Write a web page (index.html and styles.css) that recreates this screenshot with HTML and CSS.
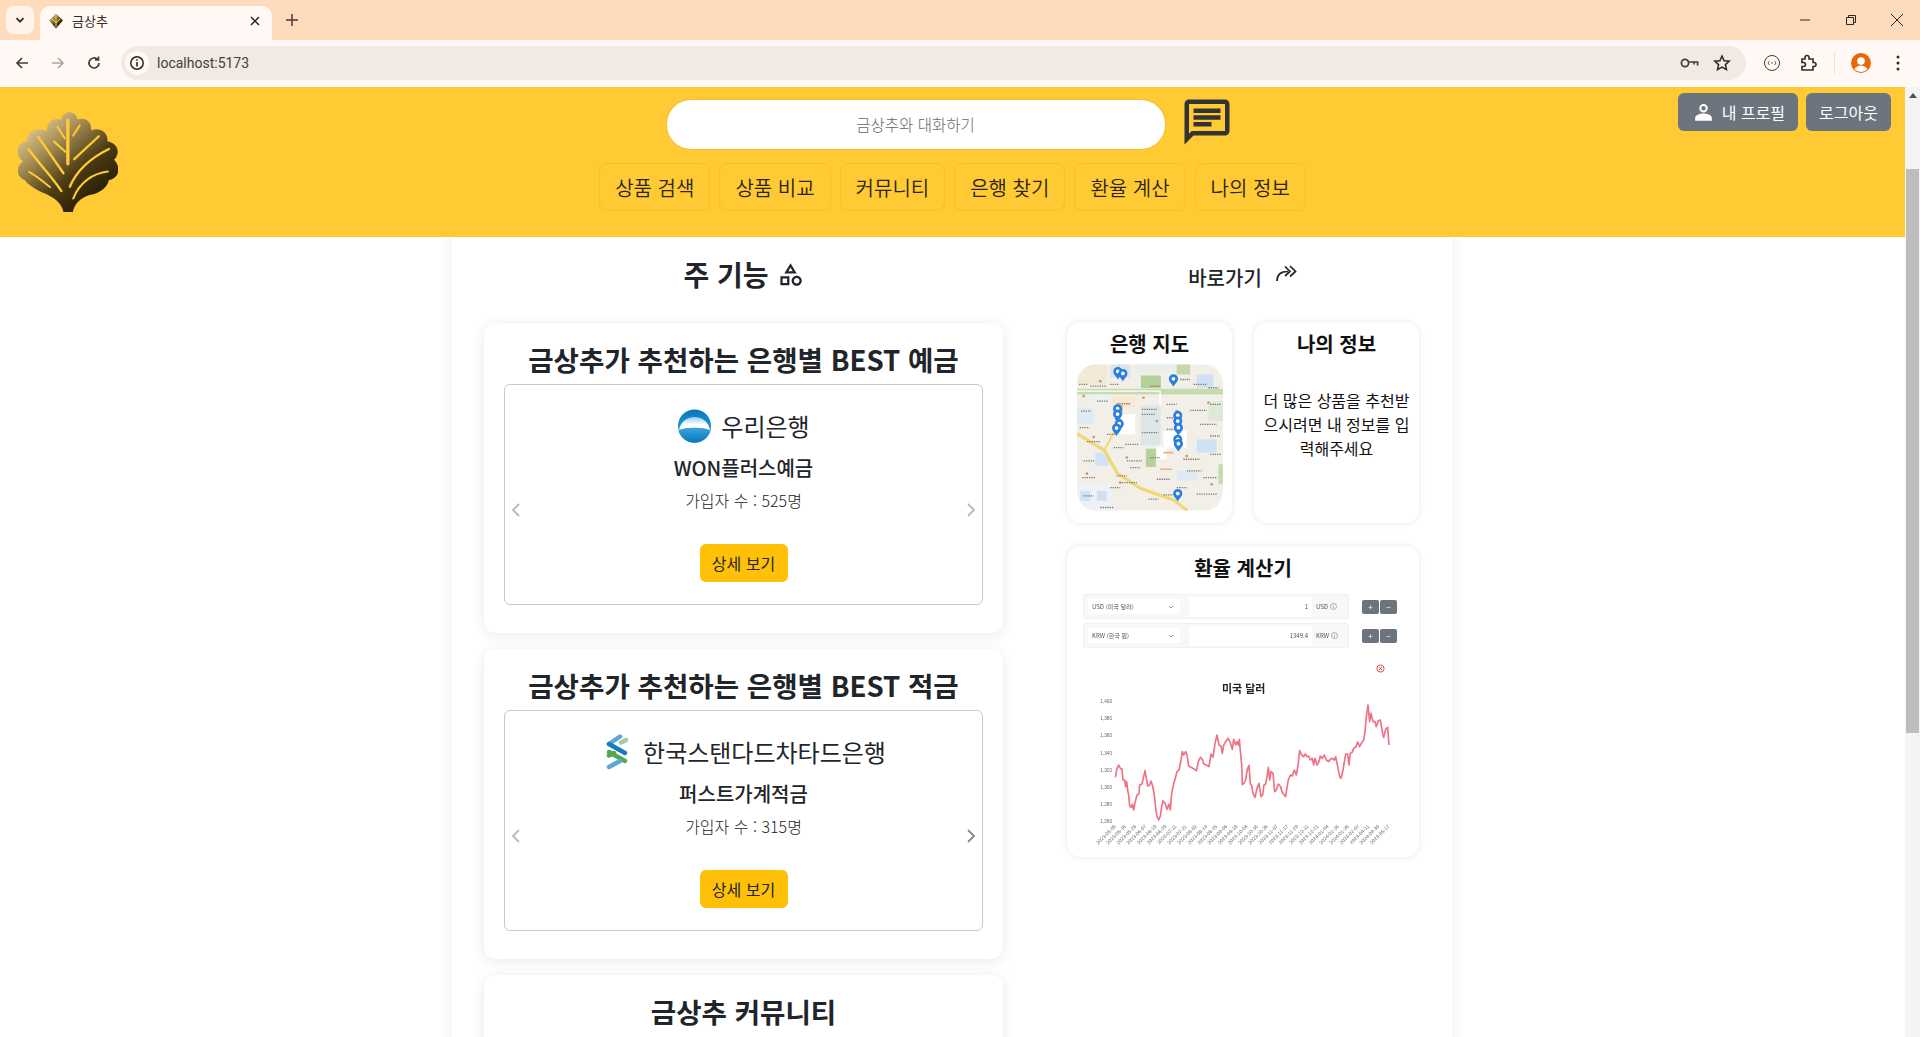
FILE: index.html
```html
<!DOCTYPE html>
<html lang="ko">
<head>
<meta charset="utf-8">
<title>금상추</title>
<link rel="stylesheet" href="styles.css">
</head>
<body>
<svg class="defs" width="0" height="0" aria-hidden="true">
  <defs>
    <linearGradient id="leafGrad" x1="0.1" y1="0.1" x2="0.8" y2="0.95">
      <stop offset="0" stop-color="#e8d49a"/>
      <stop offset="0.3" stop-color="#a58c55"/>
      <stop offset="0.62" stop-color="#4e3d14"/>
      <stop offset="1" stop-color="#1d1602"/>
    </linearGradient>
    <linearGradient id="wooriTop" x1="0" y1="0" x2="0" y2="1">
      <stop offset="0" stop-color="#0a74b8"/>
      <stop offset="0.45" stop-color="#1b93d0"/>
      <stop offset="1" stop-color="#1b93d0"/>
    </linearGradient>
    <linearGradient id="wooriGlow" x1="0" y1="0" x2="0" y2="1">
      <stop offset="0" stop-color="#8fd0ee"/>
      <stop offset="0.55" stop-color="#ffffff"/>
      <stop offset="1" stop-color="#ffffff"/>
    </linearGradient>
    <linearGradient id="wooriBottom" x1="0" y1="0" x2="0" y2="1">
      <stop offset="0" stop-color="#3aa6da"/>
      <stop offset="1" stop-color="#0a76b9"/>
    </linearGradient>
    <symbol id="pin" viewBox="0 0 24 32">
      <path d="M12 1a11 11 0 0 1 11 11c0 7-7 11-11 19C8 23 1 19 1 12A11 11 0 0 1 12 1z" fill="#2a7de1"/>
      <circle cx="12" cy="12" r="4.500" fill="#fff"/>
    </symbol>
  </defs>
</svg>

<div class="tabstrip">
  <div class="tab-search">
    <svg width="12" height="12" viewBox="0 0 12 12"><path d="M2.500 4.200 6 7.700l3.500-3.500" fill="none" stroke="#3b2a1e" stroke-width="1.800"/></svg>
  </div>
  <div class="tab">
    <svg class="favicon" width="16" height="16" viewBox="0 0 16 16"><path d="M8 0.500 15 7.500 8 15.500 1 7.500z" fill="url(#leafGrad)"/><path d="M8 2v12M4 6l4 4M12 6l-4 4" stroke="#f4d35e" stroke-width="1"/></svg>
    <span class="tab-title">금상추</span>
    <svg class="tab-close" width="12" height="12" viewBox="0 0 12 12"><path d="M2 2l8 8M10 2l-8 8" stroke="#2e2420" stroke-width="1.500"/></svg>
  </div>
  <svg class="tab-new" width="14" height="14" viewBox="0 0 14 14"><path d="M7 1v12M1 7h12" stroke="#4a3a30" stroke-width="1.500"/></svg>
  <div class="window-controls">
    <div class="win-btn"><svg width="12" height="12" viewBox="0 0 12 12"><path d="M1 6h10" stroke="#2e2420"/></svg></div>
    <div class="win-btn"><svg width="12" height="12" viewBox="0 0 12 12"><path d="M1.500 3.500h7v7h-7zM3.500 3.500v-2h7v7h-2" fill="none" stroke="#2e2420"/></svg></div>
    <div class="win-btn"><svg width="14" height="14" viewBox="0 0 14 14"><path d="M1 1l12 12M13 1 1 13" stroke="#2e2420"/></svg></div>
  </div>
</div>

<div class="toolbar">
  <div class="tool"><svg width="16" height="16" viewBox="0 0 16 16"><path d="M14 8H3M8 3 3 8l5 5" fill="none" stroke="#4b3b30" stroke-width="1.700"/></svg></div>
  <div class="tool"><svg width="16" height="16" viewBox="0 0 16 16"><path d="M2 8h11M8 3l5 5-5 5" fill="none" stroke="#b0a69f" stroke-width="1.700"/></svg></div>
  <div class="tool"><svg width="16" height="16" viewBox="0 0 16 16"><path d="M13 8a5 5 0 1 1-1.500-3.600M12.500 1.500v3.400H9" fill="none" stroke="#4b3b30" stroke-width="1.700"/></svg></div>
  <div class="omnibox">
    <div class="site-info"><svg width="16" height="16" viewBox="0 0 16 16"><circle cx="8" cy="8" r="6.200" fill="none" stroke="#2e2420" stroke-width="1.500"/><path d="M8 7v4.500M8 4.200v1.600" stroke="#2e2420" stroke-width="1.600"/></svg></div>
    <span class="url">localhost:5173</span>
    <svg class="omni-key" width="20" height="14" viewBox="0 0 20 14"><circle cx="5" cy="7" r="3.600" fill="none" stroke="#4b3b30" stroke-width="1.700"/><path d="M8.600 6h9v3.500M14 6v2.500" fill="none" stroke="#4b3b30" stroke-width="1.700"/></svg>
    <svg class="omni-star" width="18" height="18" viewBox="0 0 18 18"><path d="M9 2l2.100 4.700 5.100.5-3.800 3.400 1.100 5L9 13l-4.500 2.600 1.100-5L1.800 7.200l5.100-.5z" fill="none" stroke="#2e2420" stroke-width="1.500"/></svg>
  </div>
  <div class="tool tool-first"><svg width="18" height="18" viewBox="0 0 18 18"><circle cx="9" cy="9" r="7.500" fill="none" stroke="#4b3b30" stroke-width="1"/><path d="M6.500 7 5 9l1.500 2M11.500 7 13 9l-1.500 2M8 9h2" fill="none" stroke="#4b3b30" stroke-width=".8"/></svg></div>
  <div class="tool"><svg width="18" height="18" viewBox="0 0 18 18"><path d="M3 5h3V3.500a2 2 0 0 1 4 0V5h4v3.500h1a2 2 0 0 1 0 4h-1V16H3v-3.500h1.500a2 2 0 0 0 0-4H3z" fill="none" stroke="#3b2a1e" stroke-width="1.600"/></svg></div>
  <div class="tool-sep"></div>
  <div class="avatar"><svg width="20" height="20" viewBox="0 0 20 20"><circle cx="10" cy="10" r="10" fill="#e8670a"/><circle cx="10" cy="8" r="3.800" fill="#fff"/><path d="M3.500 16.500c1.500-3 4-4 6.500-4s5 1 6.500 4a10 10 0 0 1-13 0z" fill="#fff"/></svg></div>
  <div class="tool tool-dots"><svg width="4" height="16" viewBox="0 0 4 16"><circle cx="2" cy="2" r="1.500" fill="#3b2a1e"/><circle cx="2" cy="8" r="1.500" fill="#3b2a1e"/><circle cx="2" cy="14" r="1.500" fill="#3b2a1e"/></svg></div>
</div>

<div class="viewport">
  <div class="page">
    <header class="site-header">
      <div class="logo-col">
        <svg class="logo" width="100" height="100" viewBox="55 68 297 297">
          <path d="M190 365C186 340 160 320 135 310C110 300 85 285 75 270C52 262 44 232 70 215C42 190 52 160 82 155C82 125 112 112 140 125C140 96 165 82 182 92C190 62 224 60 232 90C258 82 274 100 272 122C302 112 324 132 320 155C350 160 362 188 340 210C362 232 356 264 325 270C320 297 290 312 265 315C240 325 222 340 218 365Z" fill="url(#leafGrad)"/>
          <g fill="none" stroke="#ffca34" stroke-linecap="round">
            <path d="M203 92V222" stroke-width="10"/>
            <path d="M115 142 190 250" stroke-width="7"/>
            <path d="M86 178C120 225 160 265 184 303" stroke-width="7"/>
            <path d="M88 246C110 258 130 275 150 291" stroke-width="6"/>
            <path d="M172 112 194 146" stroke-width="6"/>
            <path d="M162 156 196 186" stroke-width="6"/>
            <path d="M238 108 219 138" stroke-width="6"/>
            <path d="M295 140 222 208" stroke-width="7"/>
            <path d="M325 178C270 205 230 240 209 290" stroke-width="7"/>
            <path d="M322 245C280 250 238 275 219 325" stroke-width="6"/>
          </g>
        </svg>
      </div>
      <div class="center-col">
        <div class="search-row">
          <div class="search">금상추와 대화하기</div>
          <svg class="chat-icon" width="54" height="54" viewBox="0 0 24 24"><path d="M20 2H4c-1.100 0-1.990.9-1.990 2L2 22l4-4h14c1.100 0 2-.9 2-2V4c0-1.100-.9-2-2-2zm0 14H5.170L4 17.170V4h16v12zM6 12h8v2H6zm0-3h12v2H6zm0-3h12v2H6z" fill="#333"/></svg>
        </div>
        <nav class="main-nav">
          <a class="nav-btn">상품 검색</a>
          <a class="nav-btn">상품 비교</a>
          <a class="nav-btn">커뮤니티</a>
          <a class="nav-btn">은행 찾기</a>
          <a class="nav-btn">환율 계산</a>
          <a class="nav-btn">나의 정보</a>
        </nav>
      </div>
      <div class="auth-col">
        <a class="gray-btn gray-btn-profile"><svg width="25" height="25" viewBox="0 0 24 24"><path d="M12 13c-2.670 0-8 1.340-8 4v3h16v-3c0-2.660-5.330-4-8-4z" fill="#fff"/><circle cx="12" cy="8" r="3.100" fill="none" stroke="#fff" stroke-width="1.900"/></svg>내 프로필</a>
        <a class="gray-btn gray-btn-logout">로그아웃</a>
      </div>
    </header>

    <div class="content-scroll">
      <main class="panel">
        <section class="left-col">
          <h2 class="features-title">주 기능
            <svg width="27" height="27" viewBox="0 0 24 24"><path d="M12 2l-5.500 9h11L12 2zm0 3.840L13.930 9h-3.870L12 5.840zM17.500 13c-2.490 0-4.500 2.010-4.500 4.500s2.010 4.500 4.500 4.500 4.500-2.010 4.500-4.500-2.010-4.500-4.500-4.500zm0 7c-1.380 0-2.500-1.120-2.500-2.500s1.120-2.500 2.500-2.500 2.500 1.120 2.500 2.500-1.120 2.500-2.500 2.500zM3 21.500h8v-8H3v8zm2-6h4v4H5v-4z" fill="#212529"/></svg>
          </h2>

          <article class="card">
            <h3 class="card-title">금상추가 추천하는 은행별 BEST 예금</h3>
            <div class="carousel">
              <svg class="arrow arrow-prev" width="10" height="16" viewBox="0 0 10 16"><path d="M8 2 2 8l6 6" fill="none" stroke="#b9b9b9" stroke-width="1.800"/></svg>
              <svg class="arrow arrow-next" width="10" height="16" viewBox="0 0 10 16"><path d="M2 2l6 6-6 6" fill="none" stroke="#b9b9b9" stroke-width="1.800"/></svg>
              <div class="bank-row">
                <svg width="35" height="34" viewBox="0 0 36 36">
                  <circle cx="18" cy="18" r="17.500" fill="url(#wooriTop)"/>
                  <path d="M1.500 23C3 12 12 8.500 18 8.500S33 12 34.500 23z" fill="url(#wooriGlow)"/>
                  <path d="M1 22.500C8 19 28 19 35 22.500A17.500 17.500 0 0 1 1 22.500z" fill="url(#wooriBottom)"/>
                </svg>
                <span class="bank-name">우리은행</span>
              </div>
              <div class="product-name">WON플러스예금</div>
              <div class="member-count">가입자 수 : 525명</div>
              <a class="detail-btn">상세 보기</a>
            </div>
          </article>

          <article class="card">
            <h3 class="card-title">금상추가 추천하는 은행별 BEST 적금</h3>
            <div class="carousel">
              <svg class="arrow arrow-prev" width="10" height="16" viewBox="0 0 10 16"><path d="M8 2 2 8l6 6" fill="none" stroke="#b9b9b9" stroke-width="1.800"/></svg>
              <svg class="arrow arrow-next" width="10" height="16" viewBox="0 0 10 16"><path d="M2 2l6 6-6 6" fill="none" stroke="#888" stroke-width="1.800"/></svg>
              <div class="bank-row bank-row-wide">
                <svg width="22" height="36" viewBox="0 0 22 36">
                  <g fill="none" stroke-width="4.500" stroke-linecap="round">
                    <path d="M15 8.500 20 6" stroke="#a9c9a8"/>
                    <path d="M14 2.500 3 10" stroke="#58a8dc"/>
                    <path d="M3 10 19 19" stroke="#137fc1"/>
                    <path d="M3 18 19 27" stroke="#52a84c"/>
                    <path d="M3 21.500 8 19" stroke="#52a84c"/>
                    <path d="M3 33 14 27" stroke="#58a8dc"/>
                  </g>
                </svg>
                <span class="bank-name">한국스탠다드차타드은행</span>
              </div>
              <div class="product-name">퍼스트가계적금</div>
              <div class="member-count">가입자 수 : 315명</div>
              <a class="detail-btn">상세 보기</a>
            </div>
          </article>

          <article class="card">
            <h3 class="card-title card-title-community">금상추 커뮤니티</h3>
          </article>
        </section>

        <aside class="right-col">
          <h2 class="shortcut-title">바로가기
            <svg width="24" height="18" viewBox="0 0 24 18"><g fill="none" stroke="#212529" stroke-width="1.700"><path d="M3 17C3 10 7 7.500 14 7.500"/><path d="M11 2.500 16 7.500 11 12"/><path d="M16 2 21.500 7.500 16 12.500"/></g></svg>
          </h2>
          <div class="mini-row">
            <div class="mini-card">
              <h4 class="mini-title">은행 지도</h4>
              <svg class="map" width="146" height="147" viewBox="0 0 439 439">
                <rect width="439" height="439" fill="#f2efe8"/>
                <rect x="0" y="0" width="90" height="60" fill="#f1ead8"/>
                <rect x="175" y="0" width="130" height="22" fill="#e8eee8"/>
                <rect x="100" y="0" width="60" height="40" fill="#d9e4ec"/>
                <rect x="192" y="33" width="60" height="38" fill="#b5d19b"/>
                <rect x="300" y="0" width="40" height="30" fill="#c3d8ac"/>
                <rect x="0" y="73" width="439" height="17" fill="#c6dbb0"/>
                <path d="M0 80H250V130" fill="none" stroke="#fff" stroke-width="4"/>
                <rect x="248" y="90" width="5" height="190" fill="#fff"/>
                <rect x="192" y="123" width="60" height="120" fill="#dce5e8"/>
                <rect x="40" y="90" width="60" height="30" fill="#eef1ee"/>
                <rect x="105" y="95" width="70" height="35" fill="#f8e8d0"/>
                <rect x="395" y="110" width="44" height="60" fill="#dfe9d8"/>
                <rect x="207" y="253" width="30" height="55" fill="#b5d19b"/>
                <rect x="0" y="130" width="50" height="50" fill="#dfeaf5"/>
                <rect x="0" y="360" width="100" height="79" fill="#eef2f6"/>
                <rect x="300" y="320" width="60" height="30" fill="#dfeaf5"/>
                <rect x="360" y="30" width="50" height="40" fill="#cfe2f5"/>
                <rect x="360" y="225" width="60" height="40" fill="#cfe2f5"/>
                <rect x="55" y="265" width="40" height="40" fill="#d0e4f6"/>
                <rect x="10" y="380" width="30" height="30" fill="#cfe2f5"/>
                <rect x="60" y="380" width="30" height="30" fill="#cfe2f5"/>
                <rect x="425" y="300" width="14" height="60" fill="#c6dbb0"/>
                <rect x="130" y="150" width="45" height="60" fill="#fff"/>
                <rect x="260" y="200" width="70" height="50" fill="#fff"/>
                <rect x="240" y="250" width="30" height="35" fill="#fff"/>
                <path d="M0 208 82 258 122 328 192 373 292 408 332 439" fill="none" stroke="#f0d878" stroke-width="10"/>
                <path d="M82 258 117 193" fill="none" stroke="#f0d878" stroke-width="6"/>
                <path d="M125 0V45" fill="none" stroke="#f0d878" stroke-width="4"/>
                <g fill="none" stroke="#85786a" stroke-width="4" stroke-dasharray="4 3">
                  <path d="M40 65h50M120 118h40M220 65h30M350 60h40M12 140h30M195 135h45M195 150h40M195 205h50M270 195h30M340 138h50M370 180h50M30 232h40M110 250h30M150 290h45M220 280h30M320 285h50M120 335h30M135 355h45M240 345h40M260 392h30M360 390h60M20 395h30M70 430h40M400 120h35M395 70h30M6 60h26M100 60h25M310 45h30M60 110h35M115 165h20M270 120h30M270 160h24M8 190h30M90 210h30M145 240h40M330 320h45M380 340h40M160 310h30M20 290h35M100 370h30M215 405h30M300 370h30M15 340h40M400 215h30M400 270h35"/>
                </g>
                <g fill="#c89a55"><circle cx="70" cy="50" r="4"/><circle cx="200" cy="100" r="4"/><circle cx="295" cy="53" r="4"/><circle cx="20" cy="95" r="4"/><circle cx="395" cy="115" r="4"/><circle cx="240" cy="170" r="4"/><circle cx="50" cy="218" r="4"/><circle cx="150" cy="280" r="4"/><circle cx="330" cy="275" r="4"/><circle cx="405" cy="360" r="4"/><circle cx="30" cy="328" r="4"/><circle cx="130" cy="355" r="4"/><circle cx="300" cy="140" r="4"/></g>
                <path d="M120 125h15v20h-15zM260 265h30M250 315h35" fill="none" stroke="#f0b070" stroke-width="5"/>
                <use href="#pin" x="108" y="6" width="30" height="40"/>
                <use href="#pin" x="123" y="12" width="30" height="40"/>
                <use href="#pin" x="275" y="28" width="30" height="40"/>
                <use href="#pin" x="107" y="118" width="30" height="40"/>
                <use href="#pin" x="107" y="134" width="30" height="40"/>
                <use href="#pin" x="112" y="163" width="30" height="40"/>
                <use href="#pin" x="104" y="176" width="30" height="40"/>
                <use href="#pin" x="288" y="138" width="30" height="40"/>
                <use href="#pin" x="288" y="155" width="30" height="40"/>
                <use href="#pin" x="290" y="175" width="30" height="40"/>
                <use href="#pin" x="288" y="210" width="30" height="40"/>
                <use href="#pin" x="290" y="223" width="30" height="40"/>
                <use href="#pin" x="288" y="373" width="30" height="40"/>
              </svg>
            </div>
            <div class="mini-card">
              <h4 class="mini-title">나의 정보</h4>
              <p class="mini-text">더 많은 상품을 추천받으시려면 내 정보를 입력해주세요</p>
            </div>
          </div>

          <div class="fx-card">
            <h4 class="mini-title">환율 계산기</h4>
            <div class="fx-shot">
              <div class="fx-line">
                <div class="fx-row">
                  <div class="fx-select"><span>USD (미국 달러)</span><svg width="6" height="4" viewBox="0 0 6 4"><path d="M1 1l2 2 2-2" fill="none" stroke="#666" stroke-width=".7"/></svg></div>
                  <div class="fx-input">1</div>
                  <div class="fx-unit">USD<svg width="7" height="7" viewBox="0 0 7 7"><circle cx="3.500" cy="3.500" r="3" fill="none" stroke="#666" stroke-width=".5"/><path d="M3.500 3v2.200M3.500 1.700v.6" stroke="#666" stroke-width=".5"/></svg></div>
                </div>
                <div class="fx-btns"><span class="fx-btn">+</span><span class="fx-btn">−</span></div>
              </div>
              <div class="fx-line">
                <div class="fx-row">
                  <div class="fx-select"><span>KRW (한국 원)</span><svg width="6" height="4" viewBox="0 0 6 4"><path d="M1 1l2 2 2-2" fill="none" stroke="#666" stroke-width=".7"/></svg></div>
                  <div class="fx-input">1349.4</div>
                  <div class="fx-unit">KRW<svg width="7" height="7" viewBox="0 0 7 7"><circle cx="3.500" cy="3.500" r="3" fill="none" stroke="#666" stroke-width=".5"/><path d="M3.500 3v2.200M3.500 1.700v.6" stroke="#666" stroke-width=".5"/></svg></div>
                </div>
                <div class="fx-btns"><span class="fx-btn">+</span><span class="fx-btn">−</span></div>
              </div>
              <div class="fx-reset"><svg width="9" height="9" viewBox="0 0 9 9"><circle cx="4.500" cy="4.500" r="3.600" fill="none" stroke="#dc3545" stroke-width=".9"/><path d="M3 3l3 3M6 3 3 6" stroke="#dc3545" stroke-width=".8"/></svg></div>
              <svg class="chart" width="352" height="160" viewBox="20 0 1056 480">
                <text class="chart-title" x="550" y="38">미국 달러</text>
                <g class="chart-y">
                  <text x="155" y="70">1,400</text>
                  <text x="155" y="121">1,380</text>
                  <text x="155" y="172">1,360</text>
                  <text x="155" y="224">1,340</text>
                  <text x="155" y="276">1,320</text>
                  <text x="155" y="327">1,300</text>
                  <text x="155" y="378">1,280</text>
                  <text x="155" y="430">1,260</text>
                </g>
                <polyline class="chart-line" points="165,292 170,265 175,255 180,265 185,268 188,300 193,300 196,320 199,305 202,330 205,345 208,378 213,382 216,372 220,390 224,368 230,345 236,342 238,315 245,312 250,290 254,272 258,295 262,318 268,315 272,303 277,318 282,345 286,385 290,408 295,420 300,408 304,380 308,362 315,372 320,388 326,372 330,390 334,340 340,312 346,290 350,275 356,270 362,240 366,215 370,225 376,215 380,225 385,258 392,262 400,266 408,272 414,245 420,232 426,238 430,252 438,255 446,260 452,222 458,232 464,190 470,165 476,195 482,198 486,220 490,195 496,185 503,175 510,188 516,208 520,178 526,195 530,185 534,195 537,178 540,212 544,255 546,314 552,308 556,300 561,268 566,256 570,312 574,316 578,340 584,352 590,325 596,310 602,350 607,345 611,315 616,312 620,290 624,262 628,300 632,275 638,280 643,335 648,330 654,312 660,318 666,338 672,345 676,350 680,322 684,300 690,285 696,288 702,270 708,285 714,250 718,212 724,225 730,230 735,222 740,230 745,228 750,240 756,235 760,255 764,235 770,255 776,245 780,228 786,235 792,225 798,240 804,245 810,238 816,235 822,240 826,230 832,260 838,290 842,295 848,270 856,222 862,222 866,255 870,220 875,218 880,205 886,202 892,186 898,200 904,188 910,180 914,155 918,110 923,75 928,125 932,100 938,125 944,125 948,140 954,122 960,120 966,155 970,172 976,148 982,142 986,195"/>
                <g class="chart-x">
                  <text x="168" y="440" transform="rotate(-45 168 440)">2023-05-05</text>
                  <text x="198" y="440" transform="rotate(-45 198 440)">2023-05-16</text>
                  <text x="229" y="440" transform="rotate(-45 229 440)">2023-05-26</text>
                  <text x="259" y="440" transform="rotate(-45 259 440)">2023-06-07</text>
                  <text x="290" y="440" transform="rotate(-45 290 440)">2023-06-19</text>
                  <text x="320" y="440" transform="rotate(-45 320 440)">2023-06-29</text>
                  <text x="350" y="440" transform="rotate(-45 350 440)">2023-07-11</text>
                  <text x="381" y="440" transform="rotate(-45 381 440)">2023-07-21</text>
                  <text x="411" y="440" transform="rotate(-45 411 440)">2023-08-02</text>
                  <text x="442" y="440" transform="rotate(-45 442 440)">2023-08-14</text>
                  <text x="472" y="440" transform="rotate(-45 472 440)">2023-08-25</text>
                  <text x="502" y="440" transform="rotate(-45 502 440)">2023-09-06</text>
                  <text x="533" y="440" transform="rotate(-45 533 440)">2023-09-18</text>
                  <text x="563" y="440" transform="rotate(-45 563 440)">2023-10-04</text>
                  <text x="594" y="440" transform="rotate(-45 594 440)">2023-10-16</text>
                  <text x="624" y="440" transform="rotate(-45 624 440)">2023-10-26</text>
                  <text x="654" y="440" transform="rotate(-45 654 440)">2023-11-07</text>
                  <text x="685" y="440" transform="rotate(-45 685 440)">2023-11-17</text>
                  <text x="715" y="440" transform="rotate(-45 715 440)">2023-11-29</text>
                  <text x="746" y="440" transform="rotate(-45 746 440)">2023-12-11</text>
                  <text x="776" y="440" transform="rotate(-45 776 440)">2023-12-21</text>
                  <text x="806" y="440" transform="rotate(-45 806 440)">2024-01-04</text>
                  <text x="837" y="440" transform="rotate(-45 837 440)">2024-01-16</text>
                  <text x="867" y="440" transform="rotate(-45 867 440)">2024-01-26</text>
                  <text x="898" y="440" transform="rotate(-45 898 440)">2024-02-07</text>
                  <text x="928" y="440" transform="rotate(-45 928 440)">2024-04-11</text>
                  <text x="958" y="440" transform="rotate(-45 958 440)">2024-04-30</text>
                  <text x="989" y="440" transform="rotate(-45 989 440)">2024-05-17</text>
                </g>
              </svg>
            </div>
          </div>
        </aside>
      </main>
    </div>
  </div>

  <div class="scrollbar">
    <div class="scroll-up"><svg width="8" height="5" viewBox="0 0 8 5"><path d="M4 0l4 5H0z" fill="#505050"/></svg></div>
    <div class="scroll-thumb"></div>
  </div>
</div>
</body>
</html>
```

FILE: styles.css
```css
* { box-sizing: border-box; }
html, body { margin: 0; height: 100%; }
body {
  display: flex;
  flex-direction: column;
  height: 100vh;
  overflow: hidden;
  background: #fff;
  color: #212529;
  font-family: "Noto Sans CJK KR", "Noto Sans", sans-serif;
}
.defs { position: absolute; }
h2, h3, h4, p { margin: 0; }

/* browser chrome */
.tabstrip {
  display: flex;
  align-items: flex-start;
  height: 40px;
  flex: none;
  background: #ffdbbd;
}
.tab-search {
  display: flex;
  align-items: center;
  justify-content: center;
  width: 28px;
  height: 28px;
  margin: 6px 6px 0;
  border-radius: 8px;
  background: #fff3ea;
}
.tab {
  display: flex;
  align-items: center;
  width: 232px;
  height: 34px;
  margin-top: 6px;
  padding: 0 11px 4px 8px;
  border-radius: 10px 10px 0 0;
  background: #fff8f4;
}
.favicon { flex: none; }
.tab-title {
  margin-left: 8px;
  font-size: 13px;
  line-height: 18px;
  color: #3b2a1e;
}
.tab-close { margin-left: auto; }
.tab-new { margin: 13px 0 0 13px; }
.window-controls { display: flex; margin-left: auto; }
.win-btn {
  display: flex;
  align-items: center;
  justify-content: center;
  width: 46px;
  height: 40px;
}

.toolbar {
  display: flex;
  align-items: center;
  flex: none;
  height: 47px;
  padding: 0 0 1px 4px;
  background: #fff8f4;
}
.tool {
  display: flex;
  align-items: center;
  justify-content: center;
  flex: none;
  width: 36px;
  height: 36px;
}
.omnibox {
  display: flex;
  align-items: center;
  flex: none;
  width: 1625px;
  height: 34px;
  margin-left: 9px;
  padding: 0 15px 0 4px;
  border-radius: 17px;
  background: #f0e9e4;
}
.site-info {
  display: flex;
  align-items: center;
  justify-content: center;
  width: 24px;
  height: 24px;
  border-radius: 50%;
  background: #fff8f4;
}
.url {
  margin-left: 8px;
  font-family: Roboto, "Liberation Sans", sans-serif;
  font-size: 14px;
  color: #4b3b30;
}
.omni-key { margin-left: auto; }
.omni-star { margin-left: 13px; }
.tool-first { margin-left: 8px; }
.tool-sep {
  width: 1px;
  height: 22px;
  margin-left: 8px;
  background: #f0e0d4;
}
.avatar {
  display: flex;
  margin-left: 16px;
}
.tool-dots { margin-left: 9px; }

/* page */
.viewport {
  display: flex;
  flex: 1;
  min-height: 0;
}
.page {
  display: flex;
  flex-direction: column;
  flex: 1;
  min-width: 0;
}
.site-header {
  display: grid;
  grid-template-columns: 1fr auto 1fr;
  flex: none;
  height: 150px;
  background: #ffca34;
}
.logo-col { padding: 25px 0 0 18px; }
.logo { display: block; }
.center-col {
  display: flex;
  flex-direction: column;
  align-items: center;
  padding-top: 13px;
}
.search-row {
  display: flex;
  align-items: flex-start;
  margin-left: -5px;
}
.search {
  display: flex;
  align-items: center;
  justify-content: center;
  width: 498px;
  height: 49px;
  padding-bottom: 2px;
  border-radius: 24px;
  background: #fff;
  box-shadow: 0 0 2px rgba(0, 0, 0, .15);
  font-size: 15.500px;
  font-weight: 300;
  color: #666;
}
.chat-icon { margin: -5px 0 0 15px; }
.main-nav {
  display: flex;
  gap: 9px;
  margin-top: 14px;
}
.nav-btn {
  display: flex;
  align-items: center;
  height: 48px;
  padding: 0 15px;
  border: 1px solid #fbbf1c;
  border-radius: 8px;
  font-size: 20px;
  font-weight: 350;
  color: #2b2410;
}
.auth-col {
  display: flex;
  justify-content: flex-end;
  align-items: flex-start;
  gap: 8px;
  padding: 6px 14px 0 0;
}
.gray-btn {
  display: flex;
  align-items: center;
  gap: 6px;
  height: 38px;
  padding: 0 13px;
  border-radius: 6px;
  background: #6c757d;
  font-size: 16px;
  color: #fff;
  white-space: nowrap;
}

.content-scroll {
  flex: 1;
  min-height: 0;
  overflow: hidden;
}
.panel {
  display: grid;
  grid-template-columns: 519px 352px;
  column-gap: 64px;
  width: 1000px;
  min-height: 100%;
  margin: 0 auto 0 452px;
  padding: 0 32px;
  background: #fff;
  box-shadow: 0 0 14px rgba(0, 0, 0, .08);
}
.features-title {
  display: flex;
  justify-content: center;
  align-items: center;
  gap: 8px;
  height: 44px;
  margin: 15px 0 27px;
  font-size: 28px;
  font-weight: 700;
}
.card {
  margin-bottom: 16px;
  padding: 15px 20px 28px 20px;
  border-radius: 12px;
  background: #fff;
  box-shadow: 0 2px 14px rgba(0, 0, 0, .09);
}
.card-title {
  height: 46px;
  font-size: 27.600px;
  font-weight: 700;
  line-height: 42px;
  text-align: center;
  white-space: nowrap;
}
.card-title-community { height: 42px; }
.carousel {
  position: relative;
  display: flex;
  flex-direction: column;
  align-items: center;
  height: 221px;
  padding-top: 24px;
  border: 1px solid #c9c9c9;
  border-radius: 6px;
}
.arrow { position: absolute; top: 117px; }
.arrow-prev { left: 6px; }
.arrow-next { right: 6px; }
.bank-row {
  display: flex;
  align-items: center;
  gap: 9px;
  height: 34px;
}
.bank-row-wide { gap: 15px; margin-left: 5px; }
.bank-name {
  font-size: 24px;
  font-weight: 400;
  line-height: 34px;
  white-space: nowrap;
}
.product-name {
  margin-top: 10px;
  font-size: 20px;
  font-weight: 500;
  line-height: 30px;
}
.member-count {
  margin-top: 5px;
  font-size: 16px;
  font-weight: 300;
  line-height: 24px;
}
.detail-btn {
  display: flex;
  align-items: center;
  justify-content: center;
  width: 88px;
  height: 38px;
  margin-top: 32px;
  border-radius: 6px;
  background: #ffc107;
  font-size: 16px;
  font-weight: 400;
  color: #212529;
}

.shortcut-title {
  display: flex;
  justify-content: center;
  align-items: center;
  gap: 12px;
  height: 32px;
  margin: 24px 0 29px;
  font-size: 20px;
  font-weight: 500;
}
.shortcut-title svg { margin-top: -8px; }
.mini-row {
  display: grid;
  grid-template-columns: 165px 165px;
  gap: 22px;
}
.mini-card {
  height: 201px;
  padding: 7px 8px 0;
  border-radius: 14px;
  background: #fff;
  box-shadow: 0 0 6px rgba(0, 0, 0, .1);
}
.mini-title {
  font-size: 20px;
  font-weight: 600;
  line-height: 30px;
  text-align: center;
  color: #111;
}
.map {
  display: block;
  margin: 5px auto 0;
  border-radius: 20px;
  filter: blur(.6px);
}
.mini-text {
  margin-top: 29px;
  font-size: 16px;
  line-height: 24px;
  text-align: center;
  word-break: break-all;
  color: #111;
}
.fx-card {
  height: 311px;
  margin-top: 23px;
  padding-top: 7px;
  border-radius: 14px;
  background: #fff;
  box-shadow: 0 0 6px rgba(0, 0, 0, .1);
}
.fx-shot {
  margin-top: 11px;
  filter: blur(.4px);
}
.fx-line {
  display: flex;
  align-items: center;
  gap: 13px;
  height: 25px;
  margin: 0 0 4px 16px;
}
.fx-row {
  display: flex;
  align-items: center;
  width: 266px;
  height: 25px;
  padding: 0 4px;
  border: 1px solid #f0f0f0;
  border-radius: 2px;
  background: #f8f8f8;
  font-size: 6px;
  color: #555;
}
.fx-select {
  display: flex;
  justify-content: space-between;
  align-items: center;
  width: 92px;
  height: 15px;
  padding: 0 6px 0 4px;
  background: #fff;
}
.fx-input {
  width: 123px;
  height: 20px;
  margin-left: 9px;
  padding-right: 4px;
  background: #fff;
  line-height: 20px;
  text-align: right;
}
.fx-unit {
  display: flex;
  align-items: center;
  gap: 2px;
  padding-left: 4px;
}
.fx-btns { display: flex; gap: 1px; }
.fx-btn {
  display: flex;
  align-items: center;
  justify-content: center;
  width: 17px;
  height: 14px;
  border-radius: 2px;
  background: #6c757d;
  font-size: 8px;
  color: #fff;
}
.fx-reset {
  display: flex;
  justify-content: flex-end;
  height: 9px;
  margin-top: 16px;
  padding-right: 34px;
}
.chart {
  display: block;
  margin-top: 7px;
  overflow: visible;
}
.chart-title {
  font-size: 33px;
  font-weight: 700;
  text-anchor: middle;
  fill: #222;
}
.chart-y text {
  font-family: "Liberation Sans", sans-serif;
  font-size: 14px;
  text-anchor: end;
  fill: #666;
}
.chart-x text {
  font-family: "Liberation Sans", sans-serif;
  font-size: 15px;
  text-anchor: end;
  fill: #666;
}
.chart-line {
  fill: none;
  stroke: #ee7285;
  stroke-width: 5;
  stroke-linejoin: round;
}

.scrollbar {
  flex: none;
  width: 15px;
  background: #f4f4f4;
}
.scroll-up {
  display: flex;
  align-items: center;
  justify-content: center;
  height: 17px;
}
.scroll-thumb {
  height: 564px;
  margin: 65px 1px 0;
  background: #bdbdbd;
}
```
